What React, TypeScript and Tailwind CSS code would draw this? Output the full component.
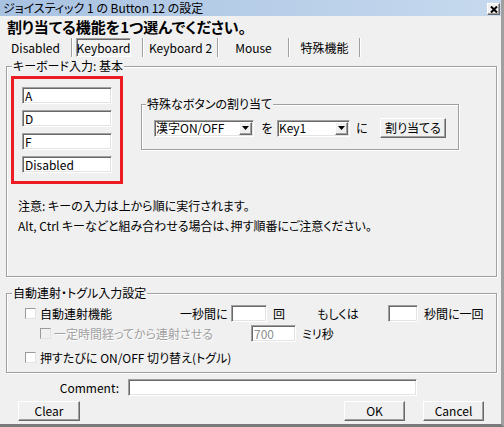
import React from "react";

const sunken =
  "bg-white border border-t-[#a0a0a0] border-l-[#a0a0a0] border-r-white border-b-white shadow-[inset_1px_1px_0_#696969,inset_-1px_-1px_0_#e3e3e3]";
const raised =
  "bg-[#f0f0f0] border border-t-white border-l-white border-r-[#696969] border-b-[#696969] shadow-[inset_-1px_-1px_0_#a0a0a0]";
const etched =
  "border border-[#a0a0a0] shadow-[inset_1px_1px_0_#fff,1px_1px_0_#fff]";

function Field({ cls, text, muted }: { cls: string; text?: string; muted?: boolean }) {
  return (
    <div
      className={`${sunken} ${cls} shrink-0 flex items-center pl-[2px] leading-[14px] ${
        muted ? "text-[#8f8f8f]" : "text-black"
      }`}
    >
      {text}
    </div>
  );
}

function Select({ cls, text }: { cls: string; text: string }) {
  return (
    <div className={`${sunken} ${cls} shrink-0 flex items-center justify-between pl-[1px] pr-[1px]`}>
      <span className="leading-[14px]">{text}</span>
      <div className={`${raised} w-[13px] h-[13px] flex items-center justify-center`}>
        <svg width="7" height="4" viewBox="0 0 7 4">
          <path d="M0 0 H7 L3.5 4 Z" fill="#000" />
        </svg>
      </div>
    </div>
  );
}

function Check({ disabled }: { disabled?: boolean }) {
  return (
    <div
      className={`w-[11px] h-[11px] shrink-0 border border-t-[#9a9a9a] border-l-[#9a9a9a] border-r-[#e3e3e3] border-b-[#e3e3e3] ${
        disabled ? "bg-[#f0f0f0]" : "bg-white"
      }`}
    />
  );
}

function Sep() {
  return <div className="w-[2px] h-full shrink-0 border-l border-l-[#a0a0a0] border-r border-r-white" />;
}

export default function App() {
  return (
    <div className="w-[504px] h-[427px] overflow-hidden bg-[#f0f0f0] flex flex-col text-[12px] leading-[14px] text-black font-['Noto_Sans_CJK_JP',sans-serif] [font-feature-settings:'palt'] border-r-[3px] border-b-[3px] border-r-[#a0a0a0] border-b-[#7a7a7a]">
      {/* Title bar */}
      <div className="h-[16px] shrink-0 flex items-start bg-linear-to-r from-[#a8c2e2] to-[#c6d9ee] pl-[3px]">
        <span className="mt-[1px] leading-[14px] text-black">ジョイスティック 1 の Button 12 の設定</span>
        <div className={`${raised} ml-auto mr-[1px] mt-[3px] w-[13px] h-[12px] flex items-center justify-center`}>
          <svg width="8" height="7" viewBox="0 0 8 7">
            <path d="M1 0.5 L7 6.5 M7 0.5 L1 6.5" stroke="#000" strokeWidth="2" />
          </svg>
        </div>
      </div>

      {/* Heading */}
      <div className="h-[22px] shrink-0 flex items-center pl-[7px] text-[15px] font-bold leading-[18px]">
        割り当てる機能を1つ選んでください。
      </div>

      {/* Tabs */}
      <div className="h-[19px] shrink-0 flex items-stretch">
        <div className="w-[71px] flex items-center justify-center">Disabled</div>
        <Sep />
        <div className="w-[69px] flex items-stretch">
          <div className="ml-[3px] w-[55px] flex items-center justify-center border border-t-[#a0a0a0] border-l-[#a0a0a0] border-r-white border-b-white shadow-[inset_1px_1px_0_#696969] bg-[#f4f4f4]">
            Keyboard
          </div>
        </div>
        <Sep />
        <div className="w-[73px] flex items-center justify-center">Keyboard 2</div>
        <Sep />
        <div className="w-[69px] flex items-center justify-center">Mouse</div>
        <Sep />
        <div className="w-[69px] flex items-center justify-center">特殊機能</div>
        <Sep />
      </div>

      {/* Group 1 */}
      <div className={`${etched} relative mt-[9px] ml-[6px] w-[491px] h-[211px] shrink-0 pt-[9px] pl-[4px]`}>
        <span className="absolute left-[5px] -top-[8px] px-[1px] bg-[#f0f0f0] leading-[14px]">
          キーボード入力: 基本
        </span>
        <div className="flex items-start">
          <div className="w-[112px] h-[108px] border-[3px] border-[#ed1c24] flex flex-col gap-[6px] pt-[8px] pl-[8px]">
            <Field cls="w-[90px] h-[17px]" text="A" />
            <Field cls="w-[90px] h-[17px]" text="D" />
            <Field cls="w-[90px] h-[17px]" text="F" />
            <Field cls="w-[90px] h-[17px]" text="Disabled" />
          </div>
          <div className={`${etched} relative ml-[18px] mt-[28px] w-[318px] h-[46px] pt-[13px] pl-[12px]`}>
            <span className="absolute left-[4px] -top-[8px] px-[1px] bg-[#f0f0f0] leading-[14px]">
              特殊なボタンの割り当て
            </span>
            <div className="flex items-center h-[20px]">
              <Select cls="w-[100px] h-[17px]" text="漢字ON/OFF" />
              <span className="ml-[7px] w-[12px] text-center">を</span>
              <Select cls="ml-[4px] w-[73px] h-[17px]" text="Key1" />
              <span className="ml-[6px] w-[12px] text-center">に</span>
              <div className={`${raised} ml-[12px] w-[66px] h-[20px] flex items-center justify-center`}>
                割り当てる
              </div>
            </div>
          </div>
        </div>
        <div className="mt-[12px] ml-[7px] leading-[20px]">
          <div>注意: キーの入力は上から順に実行されます。</div>
          <div>Alt, Ctrl キーなどと組み合わせる場合は、押す順番にご注意ください。</div>
        </div>
      </div>

      {/* Group 2 */}
      <div className={`${etched} relative mt-[16px] ml-[6px] w-[491px] h-[80px] shrink-0 pt-[11px]`}>
        <span className="absolute left-[5px] -top-[8px] px-[1px] bg-[#f0f0f0] leading-[14px]">
          自動連射・トグル入力設定
        </span>
        <div className="flex items-center h-[17px] pl-[18px]">
          <Check />
          <span className="ml-[4px] w-[140px] shrink-0">自動連射機能</span>
          <span className="w-[51px] shrink-0">一秒間に</span>
          <Field cls="w-[36px] h-[17px]" />
          <span className="ml-[6px] w-[44px] shrink-0">回</span>
          <span className="w-[71px] shrink-0">もしくは</span>
          <Field cls="w-[30px] h-[17px]" />
          <span className="ml-[6px] shrink-0">秒間に一回</span>
        </div>
        <div className="mt-[3px] flex items-center h-[17px] pl-[33px] text-[#a0a0a0] [text-shadow:1px_1px_0_#fff]">
          <Check disabled />
          <span className="ml-[3px] w-[197px] shrink-0">一定時間経ってから連射させる</span>
          <Field cls="w-[45px] h-[17px]" text="700" muted />
          <span className="ml-[6px] shrink-0 text-black [text-shadow:none]">ミリ秒</span>
        </div>
        <div className="mt-[7px] flex items-center h-[17px] pl-[18px]">
          <Check />
          <span className="ml-[4px]">押すたびに ON/OFF 切り替え(トグル)</span>
        </div>
      </div>

      {/* Comment */}
      <div className="mt-[6px] h-[17px] shrink-0 flex items-center">
        <span className="w-[119px] text-right">Comment:</span>
        <Field cls="ml-[9px] w-[289px] h-[17px]" />
      </div>

      {/* Buttons */}
      <div className="mt-[5px] h-[20px] shrink-0 flex items-stretch pr-[17px]">
        <div className={`${raised} ml-[18px] w-[62px] flex items-center justify-center`}>Clear</div>
        <div className={`${raised} ml-auto w-[61px] flex items-center justify-center`}>OK</div>
        <div className={`${raised} ml-[18px] w-[61px] flex items-center justify-center`}>Cancel</div>
      </div>
    </div>
  );
}
